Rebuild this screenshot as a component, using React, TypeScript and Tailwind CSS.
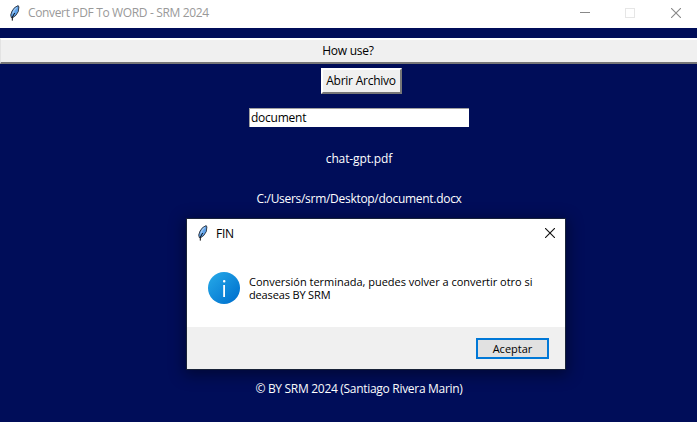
function Feather() {
  return (
    <svg width="12" height="16" viewBox="0 0 12 16" className="shrink-0">
      <path d="M9.2.6 5.6 2.6 3 6.1 1.7 10l.6 2.5 1.6.1 3-2.3 2.4-3.8.6-4.5Z" fill="#5fa2ea" stroke="#15191f" strokeWidth="0.8" />
      <path d="M7.8 2.3 5.4 4.8 3.7 8.8" stroke="#a9cdf0" strokeWidth="1.1" fill="none" />
      <path d="M5.6 8 4.6 9.8 3.3 12.4V15.6" stroke="#05070a" strokeWidth="1" fill="none" />
    </svg>
  );
}

function Close({ color }: { color: string }) {
  return (
    <svg width="10" height="10" viewBox="0 0 10 10" className="shrink-0">
      <path d="M0 0 10 10M10 0 0 10" stroke={color} strokeWidth="1.1" />
    </svg>
  );
}

function MessageDialog() {
  return (
    <section className="absolute left-[186px] top-[218px] flex h-[152px] w-[380px] flex-col border border-[#182238] bg-white text-black shadow-[0_3px_14px_2px_rgba(0,0,0,0.4)]">
      <header className="flex h-7 items-center pl-[10px] pr-[10px]">
        <Feather />
        <h2 className="ml-[7px] mt-px grow tracking-[-0.25px]">FIN</h2>
        <Close color="#111111" />
      </header>
      <div className="flex grow pl-[21px] pt-[25px]">
        <svg width="32" height="32" viewBox="0 0 32 32" className="shrink-0">
          <defs>
            <linearGradient id="info" x1="0" y1="0" x2="1" y2="1">
              <stop offset="0.1" stopColor="#23a5e6" />
              <stop offset="0.9" stopColor="#0072cf" />
            </linearGradient>
          </defs>
          <circle cx="16" cy="16" r="16" fill="url(#info)" />
          <rect x="15" y="8" width="2.4" height="2.4" rx="1" fill="white" />
          <rect x="15.2" y="13" width="1.8" height="12" fill="white" />
        </svg>
        <div className="ml-[9px] mt-[3px] whitespace-nowrap text-[11px] leading-[13px]">
          <p className="tracking-[-0.02px]">Conversión terminada, puedes volver a convertir otro si</p>
          <p className="tracking-[-0.15px]">deaseas BY SRM</p>
        </div>
      </div>
      <footer className="flex h-[42px] items-start justify-end bg-[#f0f0f0] pr-4 pt-[11px]">
        <button className="flex h-[21px] w-[73px] items-center justify-center border-2 border-[#0078d7] bg-[#e1e1e1] text-[11px]">Aceptar</button>
      </footer>
    </section>
  );
}

export default function App() {
  return (
    <div className="relative flex h-[422px] w-[697px] flex-col overflow-hidden bg-[#000d59] font-['Open_Sans','Noto_Sans',sans-serif] text-[12px] leading-4">
      <header className="flex h-7 shrink-0 items-center bg-white pb-[3px] pl-[9px] pr-[16px] text-[#999999]">
        <Feather />
        <h1 className="ml-[7px] grow tracking-[-0.35px]">Convert PDF To WORD - SRM 2024</h1>
        <div className="flex items-center">
          <span className="mr-[35px] h-px w-[10px] bg-[#888888]" />
          <span className="mr-[36px] h-[10px] w-[10px] border border-[#e6e6e6]" />
          <Close color="#888888" />
        </div>
      </header>
      <button className="mt-[10px] flex h-[26px] w-full shrink-0 items-center justify-center border-y-2 border-l border-b-[#777777] border-l-[#e3e3e3] border-t-white bg-[#f0f0f0] pr-[2px] text-black">
        <span className="tracking-[-0.25px]">How use?</span>
      </button>
      <main className="flex flex-col items-center pl-[21px] text-white">
        <button className="ml-1 mt-1 flex h-[26px] w-[81px] items-center justify-center whitespace-nowrap border-2 border-b-[#777777] border-l-white border-r-[#777777] border-t-white bg-[#f0f0f0] text-black">
          <span className="tracking-[-0.25px]">Abrir Archivo</span>
        </button>
        <div className="mt-[14px] flex h-[19px] w-[220px] items-center border-l border-t border-[#a0a0a0] bg-white pl-px text-black">
          <span className="tracking-[-0.25px]">document</span>
        </div>
        <p className="mt-[24px] tracking-[-0.12px]">chat-gpt.pdf</p>
        <p className="mt-[24px] tracking-[-0.29px]">C:/Users/srm/Desktop/document.docx</p>
        <p className="mt-[174px] tracking-[-0.3px]">© BY SRM 2024 (Santiago Rivera Marin)</p>
      </main>
      <MessageDialog />
    </div>
  );
}
